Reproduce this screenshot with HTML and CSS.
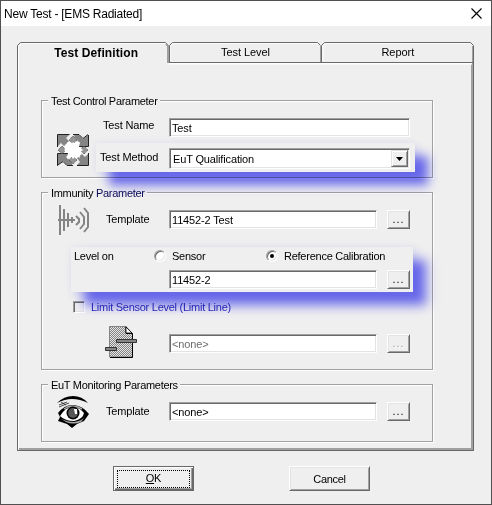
FILE: index.html
```html
<!DOCTYPE html>
<html lang="en">
<head>
<meta charset="utf-8">
<title>New Test</title>
<link rel="stylesheet" href="styles.css">
</head>
<body>
<div class="window">
  <header class="titlebar">
    <span class="title">New Test - [EMS Radiated]</span>
    <svg class="close" width="11" height="11" viewBox="0 0 11 11"><path d="M.5 .5l10 10M10.5 .5l-10 10" stroke="#000" stroke-width="1.1"/></svg>
  </header>
  <nav class="tabs">
    <svg class="tab-frame" width="457" height="23" viewBox="0 0 457 23" fill="none">
      <path d="M1.5 23V4.500L4.500 1.500H148M153 19V4.500L155.500 1.500H301M306 19V4.500L308.500 1.500H453" stroke="#fff"/>
      <path d="M152 21.500h303" stroke="#fff" stroke-width="2"/>
      <path d="M.5 23V3.500L3.500 .5H148.500L151.500 3.500M152.500 20.500V3.500L155.500 .5H300.500L303.500 3.500M304.500 20.500V3.500L307.500 .5H453.500L456.500 3.500V23M152 20.500H456" stroke="#696969"/>
      <path d="M303.500 4v16M455.500 4v16" stroke="#a0a0a0"/>
      <path d="M149 2l2 2v17" stroke="#a0a0a0" stroke-width="2"/>
    </svg>
    <span class="tab tab-active">Test Definition</span>
    <span class="tab">Test Level</span>
    <span class="tab">Report</span>
  </nav>
  <main class="panel">
    <section class="group group-control">
      <h2 class="legend">Test Control Parameter</h2>
      <div class="group-body">
        <svg class="icon icon-arrows" width="32" height="32" viewBox="0 0 32 32">
          <path d="M8 8h16v16H8z" fill="#fff"/>
          <g fill="#858585">
            <path d="M1 1H12L9 4L12 7L7 12L4 9L1 12Z"/>
            <path d="M17 1H22L26 5L31 1V12H20L23 9L18 4Z"/>
            <path d="M31 20V31H20L23 28L20 24L25 20L28 23Z"/>
            <path d="M1 31V20H12L9 23L15 28V31H10L6 27Z"/>
          </g>
          <path d="M.5 13V.5H12.500M16 .5H22L26 4.500L31 .5M20 12.500H31.500V1M20 31.500H31.500V19M.5 31.500V19.500H12M0 31.500L6 27.500L10 31.500H16" fill="none" stroke="#222"/>
          <g fill="#959595" stroke="#333" stroke-dasharray="1 1" stroke-width=".8">
            <path d="M16 2l4 4-4 4-4-4zM5 12l4 4-4 4-4-4zM27 12l4 4-4 4-4-4zM16 22l4 4-4 4-4-4z"/>
          </g>
          <path d="M10 8l4 3 2-3 3 3 4-3-1 5 4 3-4 3 1 5-4-2-3 3-2-3-4 3 1-6-4-3 4-3z" fill="#fff"/>
        </svg>
        <div class="rows">
          <div class="row"><label class="label indent">Test Name</label><div class="field wide">Test</div></div>
          <div class="highlight highlight-method">
            <div class="row"><label class="label near">Test Method</label>
              <div class="field combo"><span>EuT Qualification</span>
                <span class="drop"><svg width="7" height="4" viewBox="0 0 7 4"><path d="M0 0h7L3.500 4z"/></svg></span>
              </div>
            </div>
          </div>
        </div>
      </div>
    </section>

    <section class="group group-immunity">
      <h2 class="legend">Immunity <span class="shaded">Parameter</span></h2>
      <div class="group-body antenna-row">
        <svg class="icon" width="32" height="32" viewBox="0 0 32 32" fill="none" stroke="#848484" stroke-width="2">
          <path d="M0 15h17M2 0v30M6 4v22M10 8v14M14 12v6"/>
          <path d="M18 11l3 3v3l-3 3M22 7l4 5v7l-4 5M26 3l4 5v14l-4 5"/>
        </svg>
        <div class="row"><label class="label template">Template</label><div class="field">11452-2 Test</div><button class="browse">...</button></div>
      </div>
      <div class="highlight highlight-level">
        <div class="radios">
          <span class="level">Level on</span>
          <label class="option"><span class="radio"></span>Sensor</label>
          <label class="option"><span class="radio checked"></span>Reference Calibration</label>
        </div>
        <div class="row level-field"><div class="field">11452-2</div><button class="browse">...</button></div>
      </div>
      <label class="limit"><span class="checkbox"></span><span class="limit-text">Limit Sensor Level (Limit Line)</span></label>
      <div class="group-body document-row">
        <svg class="icon" width="32" height="32" viewBox="0 0 32 32">
          <defs><pattern id="dither" width="2" height="2" patternUnits="userSpaceOnUse"><path d="M0 0h2v2H0z" fill="#e4e4e4"/><path d="M0 0h1v1H0zM1 1h1v1H1z" fill="#858585"/></pattern></defs>
          <path d="M4.500 .5H21L27.500 7.500V31H4.500Z" fill="url(#dither)" stroke="#858585"/>
          <path d="M21 .5V7.500H27.500V31.500H5" fill="none" stroke="#000"/>
          <path d="M21 1l6 6h-6z" fill="#fff" stroke="#000" stroke-width=".8"/>
          <path d="M11.500 13.500h20v3h-20zM.5 21.500h11v3H.5z" fill="#858585" stroke="#333"/>
        </svg>
        <div class="row"><div class="field disabled">&lt;none&gt;</div><button class="browse disabled">...</button></div>
      </div>
    </section>

    <section class="group group-monitor">
      <h2 class="legend">EuT Monitoring Parameters</h2>
      <div class="group-body eye-row">
        <svg class="icon" width="32" height="32" viewBox="0 0 32 32">
          <path d="M0 7Q7 0 16 0Q25 0 31 7Q23 3 15 3Q8 3 0 7Z"/>
          <path d="M2 9l8-3M2 11l10-4M4 6l5 3" stroke="#222" stroke-width=".8"/>
          <path d="M1 17Q8 8 17 9Q26 10 32 18L27 25L20 28L15 32L10 28L1 25L3 21Z"/>
          <path d="M3 20Q9 10 17 11Q23 12 27 17Q26 23 17 25Q8 25 3 20Z" fill="#fff"/>
          <path d="M3 22Q9 26 17 26Q25 25 28 21L24 26Q16 29 9 26Z" fill="#aaa"/>
          <path d="M7 13Q15 7 25 13" fill="none" stroke="#aaa" stroke-width="1.500"/>
          <circle cx="16" cy="17" r="6.500"/><circle cx="16" cy="17" r="5" fill="#555"/>
          <path d="M17 13h3v5h-2z" fill="#fff"/>
        </svg>
        <div class="row"><label class="label template">Template</label><div class="field">&lt;none&gt;</div><button class="browse">...</button></div>
      </div>
    </section>
  </main>
  <footer class="actions">
    <button class="button default"><span class="focus"><u>O</u>K</span></button>
    <button class="button">Cancel</button>
  </footer>
</div>
</body>
</html>
```
FILE: styles.css
```css
* { box-sizing: border-box; }

body {
  margin: 0;
  font: 11px/14px "Liberation Sans", Arial, sans-serif;
  letter-spacing: -0.3px;
  color: #000;
}

button { font: inherit; letter-spacing: inherit; color: inherit; padding: 0; }

.window {
  width: 492px;
  height: 505px;
  border: 1px solid #505050;
  background: #efefef;
  overflow: hidden;
}

.titlebar {
  height: 25px;
  padding: 0 9px 0 3px;
  display: flex;
  align-items: center;
  justify-content: space-between;
  background: #fff;
  font-size: 12px;
  letter-spacing: -0.23px;
}

.tabs {
  position: relative;
  display: flex;
  width: 457px;
  height: 21px;
  margin: 16px 0 0 16px;
}

.tab-frame { position: absolute; left: 0; top: 0; z-index: 1; }

.tab {
  width: 153px;
  text-align: center;
  line-height: 21px;
  letter-spacing: -0.05px;
}

.tab-active { font-weight: bold; font-size: 12px; letter-spacing: 0.1px; padding-left: 6px; line-height: 23px; }

.panel {
  width: 457px;
  height: 388px;
  margin-left: 16px;
  padding: 37px 0 0 23px;
  display: flex;
  flex-direction: column;
  gap: 14px;
  border: solid #696969;
  border-width: 0 1px 1px;
  box-shadow: inset 1px 0 #fff, inset -2px -2px #a0a0a0;
}

.group {
  width: 392px;
  border: 1px solid #a0a0a0;
  box-shadow: inset 1px 1px #fff, 1px 1px #fff;
}

.group-control { height: 78px; }
.group-immunity { height: 178px; }
.group-monitor { height: 58px; }

.legend {
  width: fit-content;
  height: 14px;
  margin: -7px 0 0 6px;
  padding: 0 2px 0 3px;
  font-size: inherit;
  font-weight: normal;
  background: #efefef;
}

.shaded { color: #080858; }

.group-body { display: flex; padding-left: 15px; }
.icon { flex: none; display: block; margin-right: 7px; }
.icon-arrows { margin-top: 26px; }
.rows { padding-top: 10px; }
.row { display: flex; }
.label { width: 73px; line-height: 15px; letter-spacing: -0.15px; }
.label.indent { padding-left: 7px; }
.label.near { padding-left: 4px; line-height: 18px; }
.label.template { padding-left: 10px; line-height: 18px; }

.field {
  width: 208px;
  height: 19px;
  padding-left: 2px;
  line-height: 18px;
  letter-spacing: -0.15px;
  background: #fff;
  border: 1px solid;
  border-color: #a0a0a0 #fff #fff #a0a0a0;
  box-shadow: inset 1px 1px #696969, inset -1px -1px #e3e3e3;
}

.field.wide { width: 241px; }

.combo {
  width: 241px;
  height: 21px;
  padding: 1px 1px 1px 3px;
  display: flex;
  justify-content: space-between;
}

.field.disabled { color: #6d6d6d; }

.drop {
  width: 17px;
  height: 17px;
  display: flex;
  align-items: center;
  justify-content: center;
  background: #efefef;
  border: 1px solid;
  border-color: #e3e3e3 #696969 #696969 #e3e3e3;
  box-shadow: inset 1px 1px #fff, inset -1px -1px #a0a0a0;
}

.browse {
  width: 23px;
  height: 19px;
  margin-left: 10px;
  line-height: 15px;
  letter-spacing: 1px;
  background: #efefef;
  border: 1px solid;
  border-color: #fff #696969 #696969 #fff;
  box-shadow: inset 1px 1px #e3e3e3, inset -1px -1px #a0a0a0;
}

.browse.disabled { color: #a0a0a0; text-shadow: 1px 1px #fff; }

.highlight { position: relative; background: #efefef; }

.highlight::before {
  content: "";
  position: absolute;
  inset: 0;
  z-index: 1;
  pointer-events: none;
  mix-blend-mode: multiply;
  box-shadow: 13px 13px 11px #6e6efa, 2px 2px 9px #e2e2fa;
}

.highlight-method { width: 319px; height: 29px; margin-top: 6px; padding-top: 5px; }

.antenna-row { margin-top: 5px; padding-left: 16px; }
.antenna-row .icon { margin-right: 6px; }
.antenna-row .row { padding-top: 5px; }

.highlight-level { width: 342px; height: 45px; margin: 10px 0 0 29px; }

.radios {
  height: 18px;
  display: grid;
  grid-template-columns: 83px 112px auto;
  align-items: center;
  letter-spacing: -0.25px;
}

.level { padding-left: 3px; }
.option { display: flex; align-items: center; gap: 6px; }

.radio {
  width: 12px;
  height: 12px;
  display: flex;
  align-items: center;
  justify-content: center;
  border: 1px solid;
  border-color: #a0a0a0 #fff #fff #a0a0a0;
  border-radius: 50%;
  background: #fff;
  box-shadow: inset 1px 1px #696969, inset -1px -1px #e3e3e3;
}

.checked::after { content: ""; width: 4px; height: 4px; border-radius: 50%; background: #000; }

.level-field { margin: 5px 0 0 98px; }

.limit { display: flex; align-items: center; gap: 6px; height: 13px; margin: 8px 0 0 31px; }

.checkbox {
  width: 12px;
  height: 12px;
  border: 1px solid;
  border-color: #a0a0a0 #fff #fff #a0a0a0;
  box-shadow: inset 1px 1px #696969, inset -1px -1px #e3e3e3;
}

.limit-text { position: relative; z-index: 2; color: #2424b4; letter-spacing: -0.26px; }

.document-row { margin-top: 13px; padding-left: 63px; }
.document-row .icon { margin-right: 32px; }
.document-row .row { padding-top: 8px; }

.eye-row { margin-top: 4px; }
.eye-row .row { padding-top: 6px; }

.actions { display: flex; gap: 95px; margin: 15px 0 0 112px; }

.button {
  width: 81px;
  height: 25px;
  background: #efefef;
  border: 1px solid;
  border-color: #fff #696969 #696969 #fff;
  box-shadow: inset 1px 1px #e3e3e3, inset -1px -1px #a0a0a0;
}

.button.default {
  padding: 2px;
  border-color: #696969;
  box-shadow: inset 1px 1px #fff, inset -1px -1px #696969, inset -2px -2px #a0a0a0;
}

.focus { display: block; height: 18px; margin: 0 1px; border: 1px dotted #000; line-height: 15px; }
```
